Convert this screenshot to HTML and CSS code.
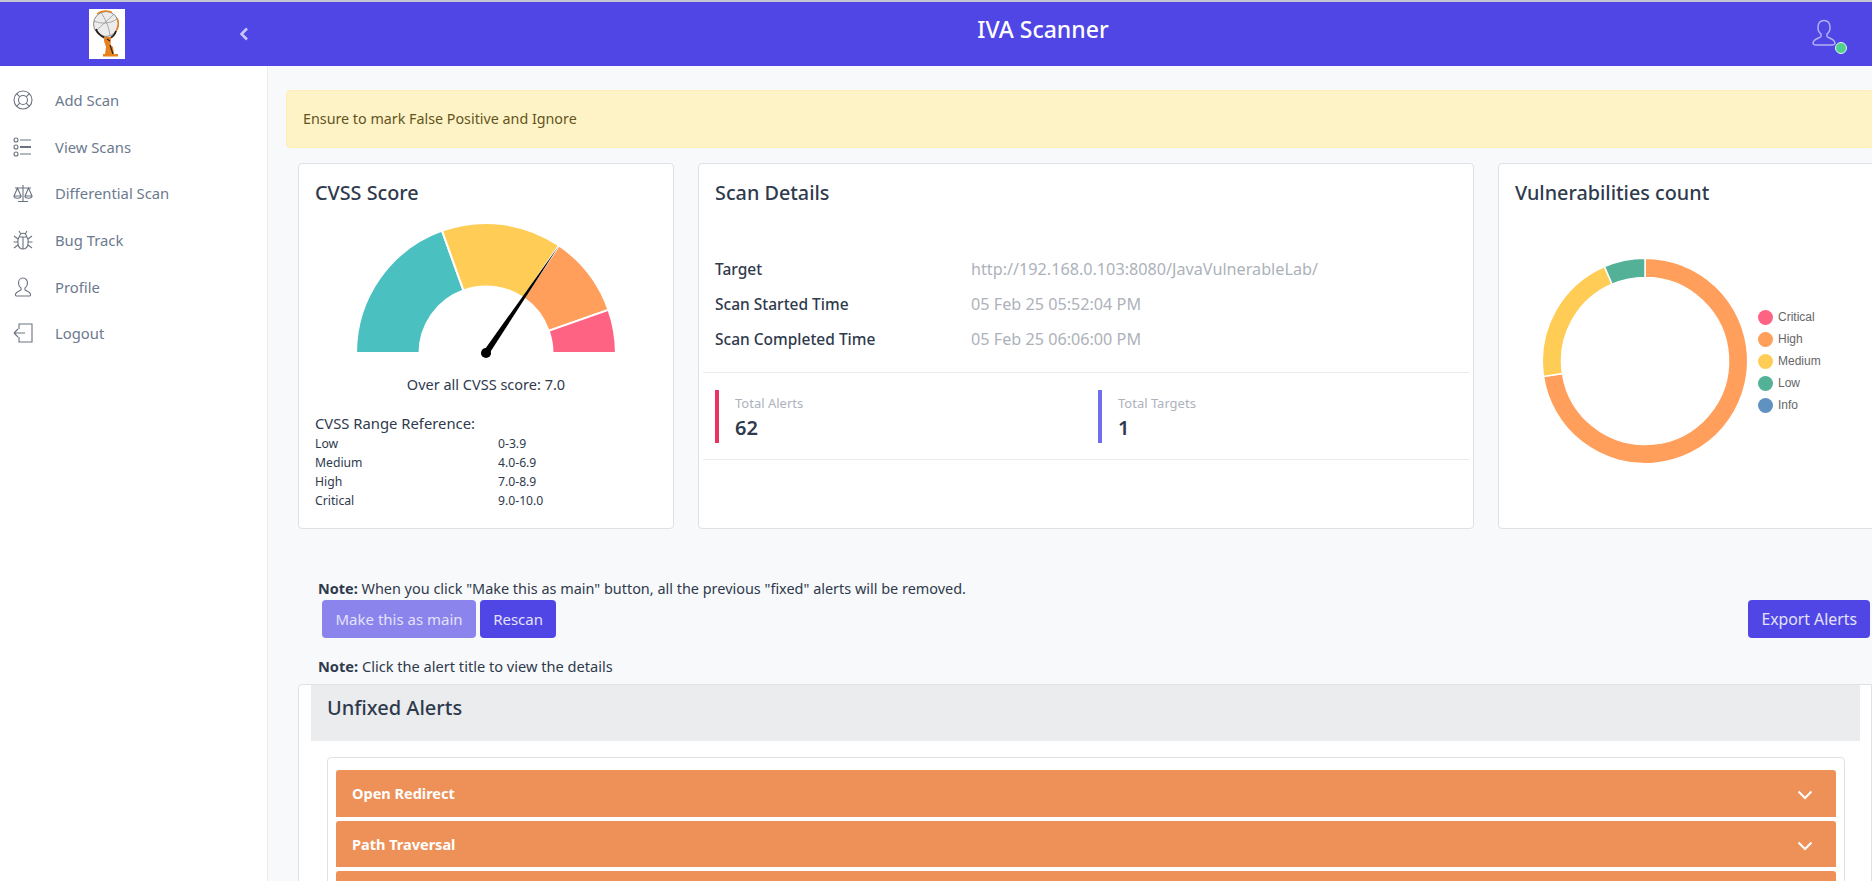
FILE: index.html
```html
<!DOCTYPE html>
<html lang="en">
<head>
    <meta charset="UTF-8">
    <meta name="viewport" content="width=device-width, initial-scale=1.0">
    <title>IVA Scanner</title>
    <link rel="stylesheet" href="styles.css">
</head>
<body>

    <header class="topbar">
        <div class="brand">
            <svg class="logo" viewBox="0 0 36 50" aria-label="Logo">
                <rect width="36" height="50" fill="#fff"/>
                <circle cx="17" cy="15" r="12.500" fill="#ececec" stroke="#8a8a8a" stroke-width="1"/>
                <path d="M8 5c4-3.500 11-4 15-1.500M28 9c2 4 1.500 9-1 13" fill="none" stroke="#e8811f" stroke-width="1.500"/>
                <path d="M5 12c7 3 16 3 23-2M7 22c6-6 13-12 17-16M12 3.500c4 6 8 14 9 23" fill="none" stroke="#8a8a8a" stroke-width=".7"/>
                <path d="M7 20c1 4 5 7 9 9M27 22c-1 3-3 6-6 7" fill="none" stroke="#2b2018" stroke-width="1.800"/>
                <path d="M15 28h7l-.5 8 2.500 2 1 7h-9l1-7-2-6z" fill="#e8811f"/>
                <path d="M21 36l3 9M18 30l3 2" fill="none" stroke="#2b2018" stroke-width="1.200"/>
                <path d="M14 45h15v2.500H14z" fill="#e8811f"/>
            </svg>
            <svg class="collapse" viewBox="0 0 10 14"><path d="M8 1.500 2.500 7 8 12.500" fill="none" stroke="currentColor" stroke-width="2.600"/></svg>
        </div>
        <div class="app-title">IVA Scanner</div>
        <div class="user">
            <svg class="user-icon" viewBox="0 0 24 30"><path d="M12 1.500c-4 0-6 3-6 7 0 3 1.500 5.500 3 6.500v2.500c0 1-6 2-7.500 5-1 2.500 0 3.500 2 3.500h17c2 0 3-1 2-3.500-1.500-3-7.500-4-7.500-5V15c1.500-1 3-3.500 3-6.500 0-4-2-7-6-7z" fill="none" stroke="currentColor" stroke-width="1.500"/></svg>
            <span class="user-dot"></span>
        </div>
    </header>

    <div class="layout">
        <nav class="sidebar">
            <a class="nav-item" href="#">
                <svg viewBox="0 0 20 20"><circle cx="10" cy="10" r="9"/><circle cx="10" cy="10" r="4.500"/><path d="M3.600 3.600 6.800 6.800M16.400 3.600 13.200 6.800M3.600 16.400 6.800 13.200M16.400 16.400 13.200 13.200"/></svg>
                Add Scan
            </a>
            <a class="nav-item" href="#">
                <svg viewBox="0 0 20 20"><circle cx="3" cy="3" r="2"/><circle cx="3" cy="10" r="2"/><circle cx="3" cy="17" r="2"/><path d="M7 3h11M7 17h11"/><path d="M7 10h11" stroke-width="2"/></svg>
                View Scans
            </a>
            <a class="nav-item" href="#">
                <svg viewBox="0 0 20 20"><path d="M10 2v16M5 18.500h10M2 5h16M4.500 5 1 13h7zM15.500 5 12 13h7zM1 13c0 3 7 3 7 0M12 13c0 3 7 3 7 0"/></svg>
                Differential Scan
            </a>
            <a class="nav-item" href="#">
                <svg viewBox="0 0 20 20"><path d="M6 7h8c2 3 2 12-4 12S4 10 6 7zM6.500 7c0-5 7-5 7 0M10 7v12M6 1l1.500 2.500M14 1l-1.500 2.500M1 6l4 3M19 6l-4 3M0.500 12h4M19.500 12h-4M1 18l4-3M19 18l-4-3"/></svg>
                Bug Track
            </a>
            <a class="nav-item" href="#">
                <svg viewBox="0 0 20 20"><path d="M10 1C7 1 5.500 3.500 5.500 6c0 2.500 1 4 2.500 5v2c-2 1-5 2-5.500 4-.3 1.500.5 2 1.500 2h12c1 0 1.800-.5 1.500-2-.5-2-3.500-3-5.500-4v-2c1.500-1 2.500-2.500 2.500-5 0-2.500-1.500-5-4.500-5z"/></svg>
                Profile
            </a>
            <a class="nav-item" href="#">
                <svg viewBox="0 0 20 20"><path d="M6 6V1h13v18H6v-5M1 10h11M1 10l4-4M1 10l4 4"/></svg>
                Logout
            </a>
        </nav>

        <main class="main">
            <div class="notice">Ensure to mark False Positive and Ignore</div>

            <section class="cards">
                <div class="card card-cvss">
                    <h2 class="card-title">CVSS Score</h2>
                    <svg class="gauge" viewBox="0 0 260 136">
                        <g stroke="#fff" stroke-width="2">
                            <path d="M1 130A129 129 0 0 1 86.300 8.600L107.650 67.900A66 66 0 0 0 64 130z" fill="#4bc0c0"/>
                            <path d="M86.300 8.600A129 129 0 0 1 202.500 23.300L167.100 75.400A66 66 0 0 0 107.650 67.900z" fill="#ffcd56"/>
                            <path d="M202.500 23.300A129 129 0 0 1 251.600 87.200L192.200 108.100A66 66 0 0 0 167.100 75.400z" fill="#ff9f5b"/>
                            <path d="M251.600 87.200A129 129 0 0 1 259 130H196A66 66 0 0 0 192.200 108.100z" fill="#ff6384"/>
                        </g>
                        <polygon points="202.500,23.300 127.500,128.300 132.500,131.700" fill="#000"/>
                        <circle cx="130" cy="130" r="5" fill="#000"/>
                    </svg>
                    <p class="gauge-label">Over all CVSS score: 7.0</p>
                    <p class="range-title">CVSS Range Reference:</p>
                    <div class="range-table">
                        <span>Low</span><span>0-3.9</span>
                        <span>Medium</span><span>4.0-6.9</span>
                        <span>High</span><span>7.0-8.9</span>
                        <span>Critical</span><span>9.0-10.0</span>
                    </div>
                </div>

                <div class="card card-details">
                    <h2 class="card-title">Scan Details</h2>
                    <div class="details">
                        <div class="detail-row"><b>Target</b><span>http://192.168.0.103:8080/JavaVulnerableLab/</span></div>
                        <div class="detail-row"><b>Scan Started Time</b><span>05 Feb 25 05:52:04 PM</span></div>
                        <div class="detail-row"><b>Scan Completed Time</b><span>05 Feb 25 06:06:00 PM</span></div>
                    </div>
                    <div class="stats">
                        <div class="stat stat-red">
                            <div class="stat-label">Total Alerts</div>
                            <div class="stat-value">62</div>
                        </div>
                        <div class="stat stat-blue">
                            <div class="stat-label">Total Targets</div>
                            <div class="stat-value">1</div>
                        </div>
                    </div>
                </div>

                <div class="card card-count">
                    <h2 class="card-title">Vulnerabilities count</h2>
                    <div class="donut-wrap">
                        <svg class="donut" viewBox="0 0 210 210">
                            <g stroke="#fff" stroke-width="1.500">
                                <path d="M105 2.300A102.700 102.700 0 1 1 3.500 120.500L22.500 117.600A83.500 83.500 0 1 0 105 21.500z" fill="#ff9f5b"/>
                                <path d="M3.500 120.500A102.700 102.700 0 0 1 64.500 10.600L72.100 28.300A83.500 83.500 0 0 0 22.500 117.600z" fill="#ffcd56"/>
                                <path d="M64.500 10.600A102.700 102.700 0 0 1 105 2.300V21.500A83.500 83.500 0 0 0 72.100 28.300z" fill="#52b196"/>
                            </g>
                        </svg>
                        <ul class="legend">
                            <li><i class="dot-critical"></i>Critical</li>
                            <li><i class="dot-high"></i>High</li>
                            <li><i class="dot-medium"></i>Medium</li>
                            <li><i class="dot-low"></i>Low</li>
                            <li><i class="dot-info"></i>Info</li>
                        </ul>
                    </div>
                </div>
            </section>

            <p class="note"><b>Note:</b> When you click "Make this as main" button, all the previous "fixed" alerts will be removed.</p>
            <div class="actions">
                <a class="btn btn-light" href="#">Make this as main</a>
                <a class="btn" href="#">Rescan</a>
                <a class="btn btn-export" href="#">Export Alerts</a>
            </div>
            <p class="note note-second"><b>Note:</b> Click the alert title to view the details</p>

            <section class="alerts">
                <h2 class="alerts-head">Unfixed Alerts</h2>
                <div class="alerts-inner">
                    <div class="alert-row">Open Redirect<svg viewBox="0 0 16 10"><path d="M1.500 1.500 8 8l6.500-6.500" fill="none" stroke="#fff" stroke-width="2"/></svg></div>
                    <div class="alert-row">Path Traversal<svg viewBox="0 0 16 10"><path d="M1.500 1.500 8 8l6.500-6.500" fill="none" stroke="#fff" stroke-width="2"/></svg></div>
                    <div class="alert-row"></div>
                </div>
            </section>
        </main>
    </div>

</body>
</html>
```
FILE: styles.css
```css
* {
    box-sizing: border-box;
}

body {
    font-family: "Noto Sans", "Open Sans", sans-serif;
    margin: 0;
    height: 100vh;
    overflow: hidden;
    display: flex;
    flex-direction: column;
    color: #2f3a4d;
    background: #f8f9fa;
}

.topbar {
    display: flex;
    align-items: center;
    height: 66px;
    flex-shrink: 0;
    background: #4f46e5;
    border-top: 2px solid #c6c6d2;
    color: #fff;
}

.brand {
    width: 267px;
    flex-shrink: 0;
    display: flex;
    align-items: center;
    padding-left: 89px;
}

.logo {
    width: 36px;
    height: 50px;
}

.collapse {
    width: 10px;
    height: 14px;
    margin-left: 114px;
    color: #c9c6f7;
}

.app-title {
    flex: 1;
    text-align: center;
    font-size: 23px;
    font-weight: 500;
    padding-bottom: 10px;
}

.user {
    width: 53px;
    flex-shrink: 0;
    position: relative;
    height: 100%;
}

.user-icon {
    position: absolute;
    left: -7px;
    top: 17px;
    width: 24px;
    height: 30px;
    color: #b4b0f4;
}

.user-dot {
    position: absolute;
    left: 16px;
    top: 40px;
    width: 12px;
    height: 12px;
    border-radius: 50%;
    background: #4fd08f;
    border: 1px solid #e8f5ee;
}

.layout {
    flex: 1;
    display: flex;
    min-height: 0;
}

.sidebar {
    width: 268px;
    flex-shrink: 0;
    background: #fff;
    border-right: 1px solid #eceef1;
    padding-top: 11px;
}

.nav-item {
    display: flex;
    align-items: center;
    gap: 22px;
    height: 46.6px;
    padding-left: 13px;
    font-size: 14.8px;
    color: #6c7a8e;
    text-decoration: none;
}

.nav-item svg {
    width: 20px;
    height: 20px;
    fill: none;
    stroke: #6b7280;
    stroke-width: 1.1;
}

.main {
    flex: 1;
    min-width: 0;
    padding: 24px 0 0 18px;
}

.notice {
    height: 58px;
    margin-right: -2px;
    padding: 0 16px 2px;
    display: flex;
    align-items: center;
    font-size: 14.3px;
    color: #64541c;
    background: #fef3c7;
    border: 1px solid #fdeeb8;
    border-radius: 4px;
}

.cards {
    display: flex;
    gap: 24px;
    margin: 15px 0 0 12px;
}

.card {
    height: 366px;
    flex-shrink: 0;
    background: #fff;
    border: 1px solid #dee2e6;
    border-radius: 4px;
    padding: 16px;
}

.card-title {
    margin: 0;
    font-size: 19.8px;
    font-weight: 500;
    line-height: 26px;
    color: #2f3a4d;
}

.card-cvss {
    width: 376px;
}

.gauge {
    display: block;
    width: 262px;
    height: 137px;
    margin: 16px auto 0;
}

.gauge-label {
    margin: 15px 0 0;
    text-align: center;
    font-size: 14.5px;
    line-height: 20px;
}

.range-title {
    margin: 19px 0 0;
    font-size: 14.8px;
    line-height: 20px;
}

.range-table {
    display: grid;
    grid-template-columns: 183px 1fr;
    font-size: 12.2px;
    line-height: 19px;
    margin-top: 1px;
}

.card-details {
    width: 776px;
    padding: 16px 4px;
}

.card-details .card-title {
    padding: 0 12px;
}

.details {
    margin-top: 45px;
    padding: 0 12px 16px;
    border-bottom: 1px solid #e9ecef;
}

.detail-row {
    display: flex;
    height: 35px;
    align-items: center;
    font-size: 15.5px;
}

.detail-row b {
    width: 256px;
    font-weight: 500;
}

.detail-row span {
    font-size: 16.2px;
    color: #adb2ba;
}

.stats {
    display: flex;
    padding: 17px 12px 16px;
    border-bottom: 1px solid #e9ecef;
}

.stat {
    width: 383px;
    flex-shrink: 0;
    height: 53px;
    padding-left: 16px;
    border-left: 4px solid #ea3364;
}

.stat-blue {
    border-left-color: #6f6eed;
}

.stat-label {
    font-size: 13px;
    line-height: 20px;
    margin-top: 3px;
    color: #adb2ba;
}

.stat-value {
    font-size: 20px;
    font-weight: 600;
    line-height: 28px;
    margin-top: 1px;
}

.card-count {
    width: 420px;
}

.donut-wrap {
    display: flex;
    align-items: center;
    margin-top: 50px;
    margin-left: 25px;
}

.donut {
    width: 210px;
    height: 210px;
}

.legend {
    list-style: none;
    margin: 0 0 0 8px;
    padding: 0;
    font-family: "Liberation Sans", sans-serif;
    font-size: 12px;
    color: #666;
}

.legend li {
    display: flex;
    align-items: center;
    gap: 5px;
    height: 22px;
}

.legend i {
    width: 15px;
    height: 15px;
    border-radius: 50%;
}

.dot-critical {
    background: #ff6384;
}

.dot-high {
    background: #ff9f5b;
}

.dot-medium {
    background: #ffcd56;
}

.dot-low {
    background: #52b196;
}

.dot-info {
    background: #5f92c0;
}

.note {
    margin: 50px 0 0 32px;
    font-size: 14.45px;
    line-height: 20px;
}

.note b {
    font-weight: 700;
}

.actions {
    display: flex;
    gap: 4px;
    margin: 1px 2px 0 36px;
}

.btn {
    height: 38px;
    padding: 0 13px;
    display: flex;
    align-items: center;
    font-size: 15px;
    color: #e4e2fb;
    text-decoration: none;
    background: #4f46e5;
    border-radius: 4px;
}

.btn-light {
    padding: 0 13.5px;
    background: #8a84ec;
}

.btn-export {
    margin-left: auto;
    font-size: 15.8px;
}

.note-second {
    margin-top: 18px;
    font-size: 14.6px;
}

.alerts {
    margin: 8px 0 0 12px;
    padding: 0 11px 0 12px;
    height: 300px;
    background: #fff;
    border: 1px solid #dee2e6;
    border-radius: 4px 0 0 0;
}

.alerts-head {
    margin: 0;
    height: 56px;
    padding: 0 16px;
    line-height: 46px;
    font-size: 20px;
    font-weight: 500;
    background: #ebecee;
}

.alerts-inner {
    margin: 16px 15px 0 16px;
    padding: 12px 8px;
    display: flex;
    flex-direction: column;
    gap: 4px;
    border: 1px solid #dee2e6;
    border-radius: 4px;
}

.alert-row {
    height: 46.5px;
    flex-shrink: 0;
    display: flex;
    align-items: center;
    justify-content: space-between;
    padding: 0 23px 0 16px;
    font-size: 14.5px;
    font-weight: 700;
    color: #fff;
    background: #ed9159;
    border-radius: 3px 3px 0 0;
}

.alert-row svg {
    width: 16px;
    height: 10px;
    margin-top: 4px;
}
```
